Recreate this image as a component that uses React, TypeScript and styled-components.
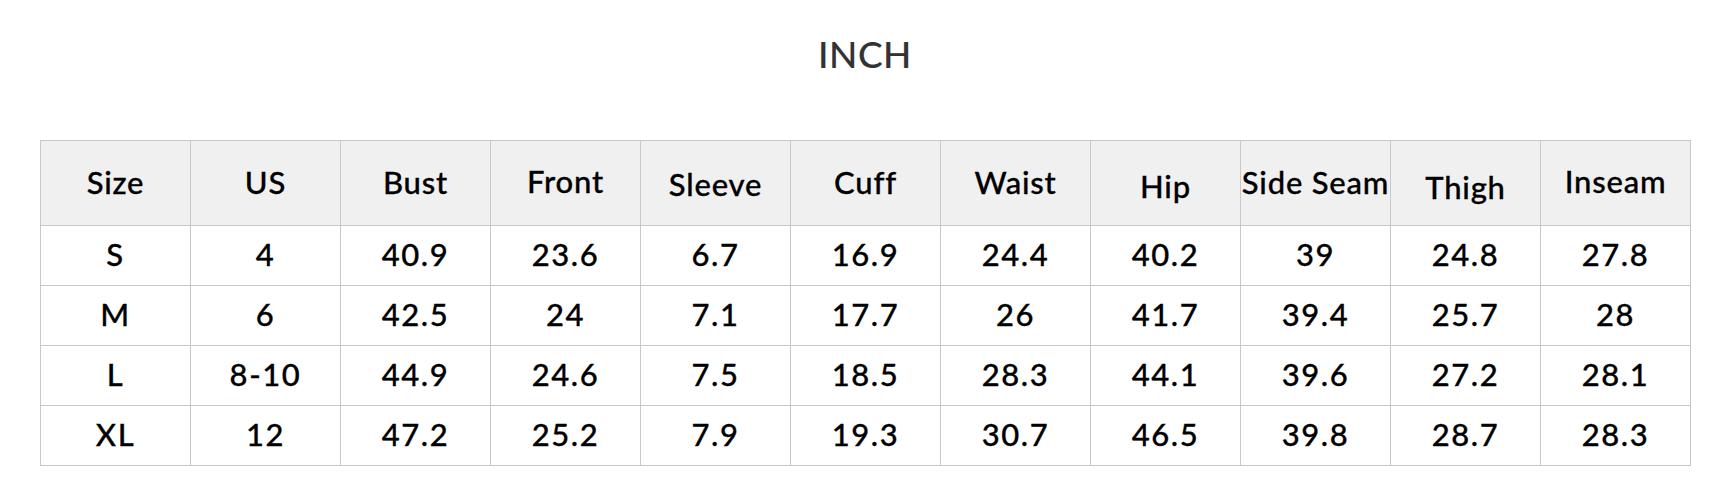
import React from 'react'
import styled, { createGlobalStyle } from 'styled-components'

// header labels; shift nudges a few labels down like the source chart
const columns = [
  { label: 'Size', shift: 0 },
  { label: 'US', shift: 0 },
  { label: 'Bust', shift: 0 },
  { label: 'Front', shift: -1 },
  { label: 'Sleeve', shift: 2 },
  { label: 'Cuff', shift: 0 },
  { label: 'Waist', shift: 0 },
  { label: 'Hip', shift: 4 },
  { label: 'Side Seam', shift: 0 },
  { label: 'Thigh', shift: 5 },
  { label: 'Inseam', shift: -1 },
]

const rows = [
  ['S', '4', '40.9', '23.6', '6.7', '16.9', '24.4', '40.2', '39', '24.8', '27.8'],
  ['M', '6', '42.5', '24', '7.1', '17.7', '26', '41.7', '39.4', '25.7', '28'],
  ['L', '8-10', '44.9', '24.6', '7.5', '18.5', '28.3', '44.1', '39.6', '27.2', '28.1'],
  ['XL', '12', '47.2', '25.2', '7.9', '19.3', '30.7', '46.5', '39.8', '28.7', '28.3'],
]

export default function App() {
  return (
    <>
      <GlobalStyle />
      <StyledPage>
        <StyledTitle>INCH</StyledTitle>
        <StyledTable>
          <colgroup>
            {columns.map(c => <col key={c.label} />)}
          </colgroup>
          <thead>
            <tr>
              {columns.map(c => (
                <StyledHeadCell key={c.label} $shift={c.shift}>{c.label}</StyledHeadCell>
              ))}
            </tr>
          </thead>
          <tbody>
            {rows.map(r => (
              <tr key={r[0]}>
                {r.map((v, i) => <StyledCell key={i}>{v}</StyledCell>)}
              </tr>
            ))}
          </tbody>
        </StyledTable>
      </StyledPage>
    </>
  )
}

const GlobalStyle = createGlobalStyle`
  html, body {
    margin: 0;
    padding: 0;
    background: #fff;
  }
  body {
    font-family: Lato, 'Noto Sans', sans-serif;
    -webkit-font-smoothing: antialiased;
  }
`

const StyledPage = styled.div`
  width: 1730px;
  height: 480px;
  box-sizing: border-box;
  padding: 0 40px;
`

const StyledTitle = styled.h2`
  margin: 0;
  height: 140px;
  box-sizing: border-box;
  padding-top: 35px;
  font-size: 37px;
  line-height: 1;
  font-weight: 500;
  letter-spacing: 0.5px;
  color: #333;
  text-align: center;
  -webkit-text-stroke: 0.1px #333;
`

const StyledTable = styled.table`
  width: 1650px;
  table-layout: fixed;
  border-collapse: collapse;
  color: #000;

  col {
    width: 150px;
  }

  thead tr {
    height: 85px;
  }

  tbody tr {
    height: 60px;
  }
`

const StyledHeadCell = styled.th<{ $shift: number }>`
  padding: ${p => (p.$shift > 0 ? p.$shift * 2 : 0)}px 0 ${p => (p.$shift < 0 ? -p.$shift * 2 : 0) + 2}px;
  border: 1px solid #c8c8c8;
  background: #f0f0f0;
  font-size: 31px;
  font-weight: 500;
  letter-spacing: 0.8px;
  white-space: nowrap;
  text-align: center;
  vertical-align: middle;
  -webkit-text-stroke: 0.3px #000;
`

const StyledCell = styled.td`
  padding: 0 0 3px;
  border: 1px solid #c8c8c8;
  font-size: 31px;
  font-weight: 500;
  letter-spacing: 1.6px;
  text-align: center;
  vertical-align: middle;
  -webkit-text-stroke: 0.3px #000;
`
